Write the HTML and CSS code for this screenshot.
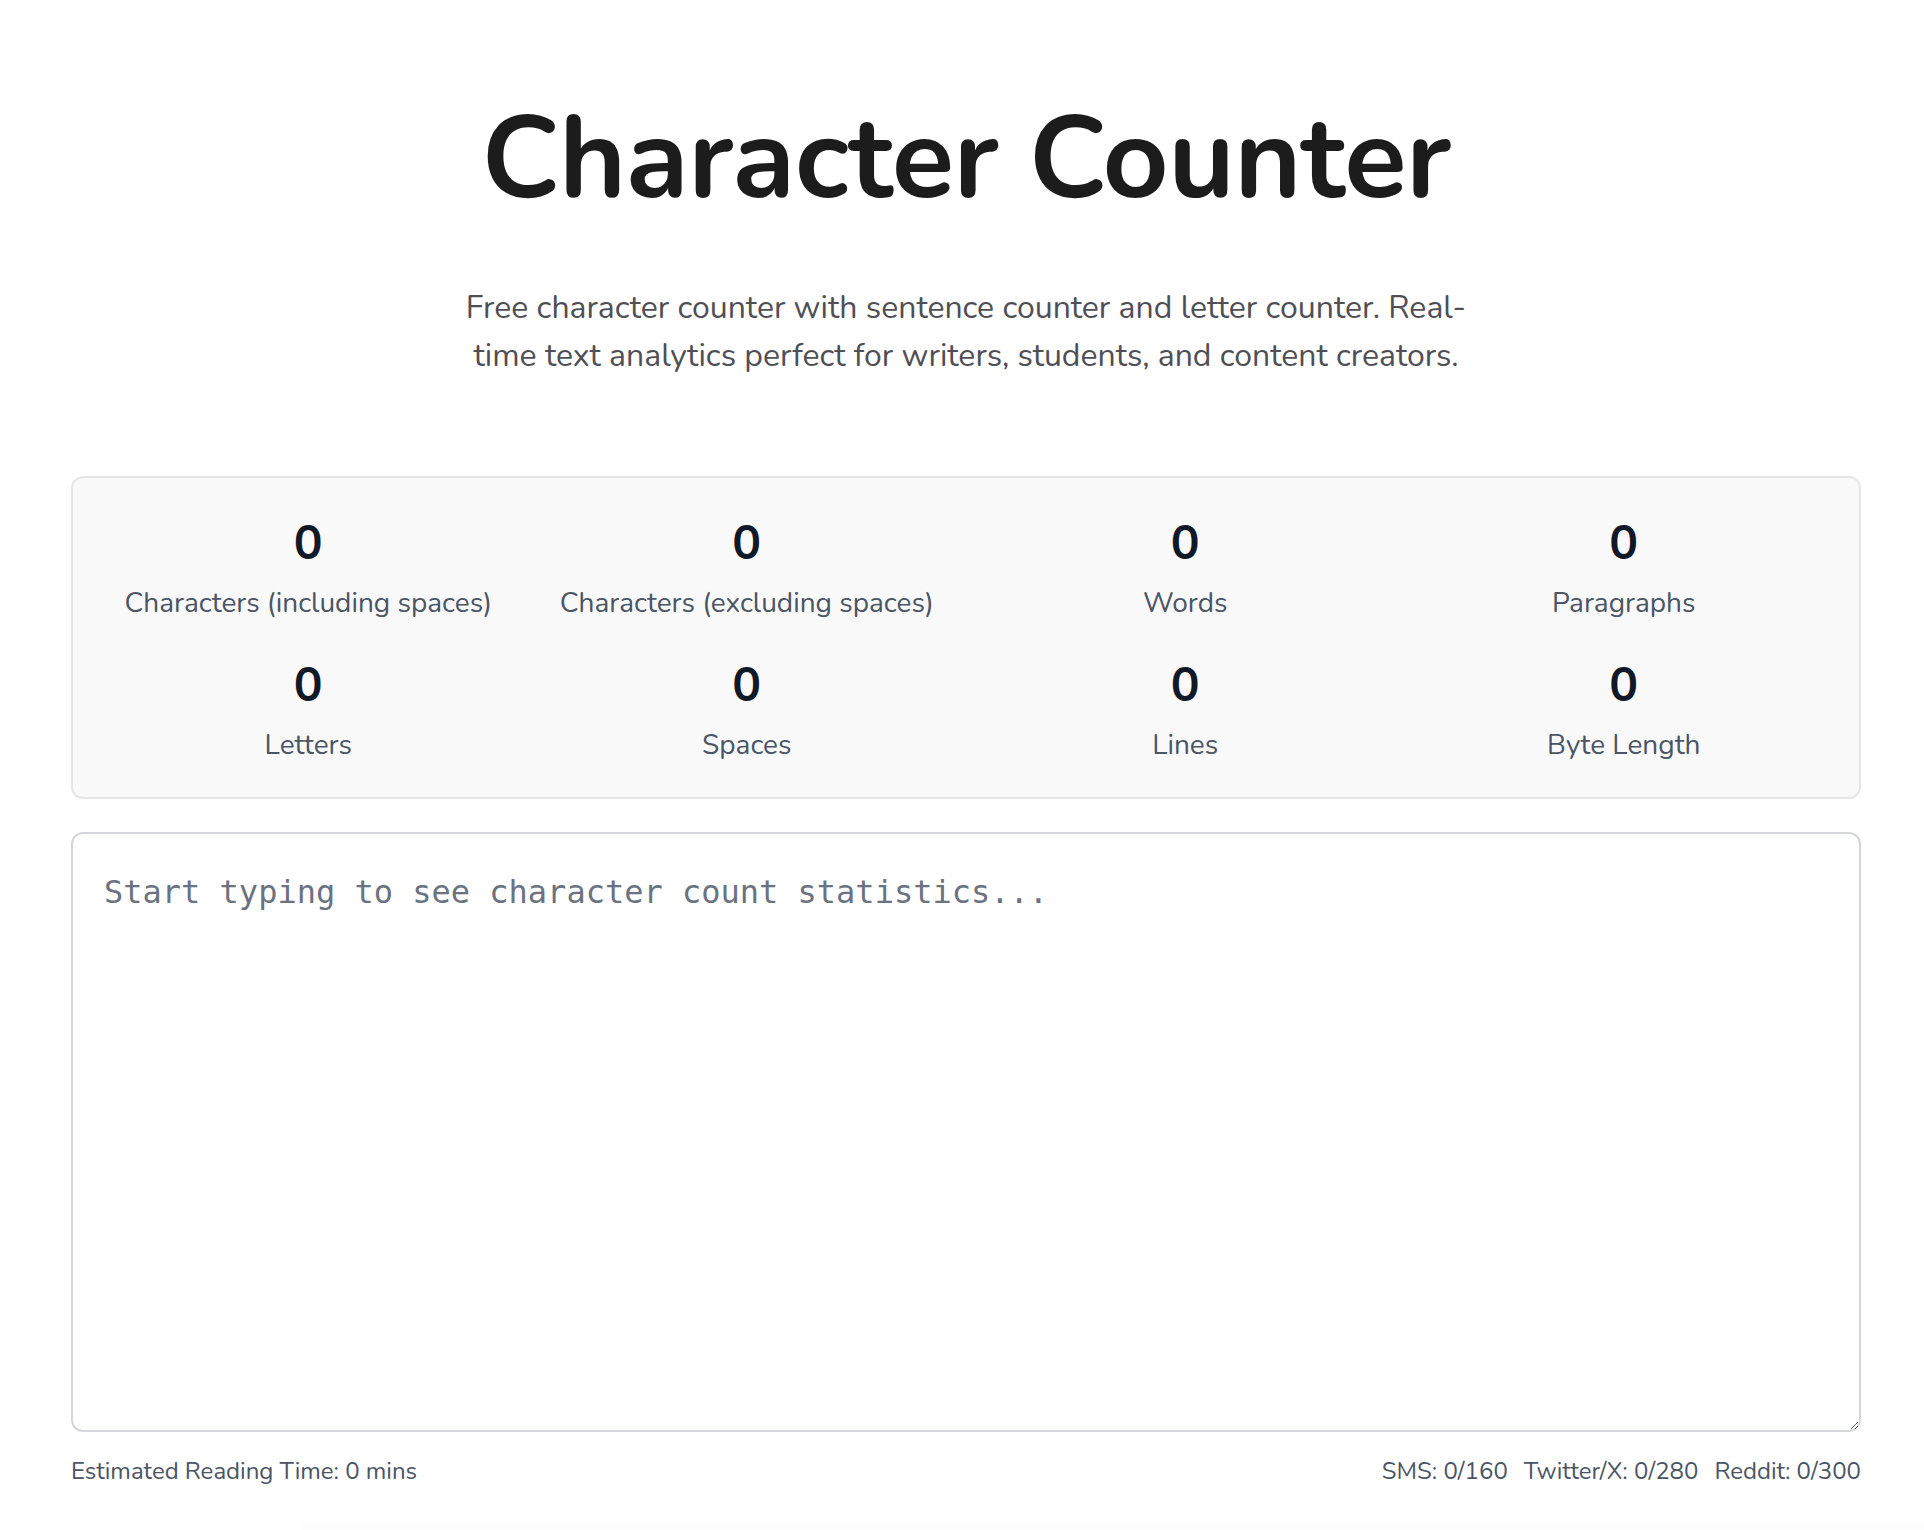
FILE: index.html
```html
<!DOCTYPE html>
<html lang="en">
<head>
<meta charset="utf-8">
<title>Character Counter</title>
<link rel="stylesheet" href="styles.css">
</head>
<body>
<main class="page">
  <header class="hero">
    <h1 class="title">Character Counter</h1>
    <p class="subtitle">Free character counter with sentence counter and letter counter. Real-time text analytics perfect for writers, students, and content creators.</p>
  </header>

  <section class="stats">
    <div class="stat"><div class="stat-num">0</div><div class="stat-label">Characters (including spaces)</div></div>
    <div class="stat"><div class="stat-num">0</div><div class="stat-label">Characters (excluding spaces)</div></div>
    <div class="stat"><div class="stat-num">0</div><div class="stat-label">Words</div></div>
    <div class="stat"><div class="stat-num">0</div><div class="stat-label">Paragraphs</div></div>
    <div class="stat"><div class="stat-num">0</div><div class="stat-label">Letters</div></div>
    <div class="stat"><div class="stat-num">0</div><div class="stat-label">Spaces</div></div>
    <div class="stat"><div class="stat-num">0</div><div class="stat-label">Lines</div></div>
    <div class="stat"><div class="stat-num">0</div><div class="stat-label">Byte Length</div></div>
  </section>

  <textarea class="editor" placeholder="Start typing to see character count statistics..."></textarea>

  <div class="meta">
    <span>Estimated Reading Time: 0 mins</span>
    <div class="limits">
      <span>SMS: 0/160</span>
      <span>Twitter/X: 0/280</span>
      <span>Reddit: 0/300</span>
    </div>
  </div>
</main>
<div class="next-section"></div>
</body>
</html>
```

FILE: styles.css
```css
* { box-sizing: border-box; }

html, body {
  margin: 0;
  background: #ffffff;
}

body {
  padding-left: 8px;
  font-family: "Nunito", "Lato", "Open Sans", sans-serif;
  color: #1c1c1c;
}

.page {
  max-width: 1790px;
  margin: 0 auto;
}

.hero {
  display: flex;
  flex-direction: column;
  align-items: center;
  padding-top: 90px;
}

.title {
  margin: 0;
  font-size: 115px;
  line-height: 140px;
  font-weight: 700;
  color: #1c1c1c;
  letter-spacing: -0.5px;
}

.subtitle {
  margin: 54px 0 0;
  max-width: 1024px;
  text-align: center;
  font-size: 32px;
  line-height: 48px;
  color: #4f4f55;
}

.stats {
  margin-top: 96px;
  display: grid;
  grid-template-columns: repeat(4, 1fr);
  column-gap: 32px;
  row-gap: 34px;
  padding: 37px 32px 32px;
  background: #f9f9fa;
  border: 2px solid #e6e6ea;
  border-radius: 12px;
}

.stat {
  display: flex;
  flex-direction: column;
  align-items: center;
  text-align: center;
}

.stat-num {
  font-size: 48px;
  line-height: 56px;
  font-weight: 700;
  color: #111827;
}

.stat-label {
  margin-top: 12px;
  font-size: 28px;
  line-height: 40px;
  color: #4b5563;
}

.editor {
  display: block;
  width: 100%;
  height: 600px;
  margin-top: 33px;
  padding: 34px 31px 31px;
  border: 2px solid #d4d6dc;
  border-radius: 12px;
  background: #ffffff;
  font-family: "DejaVu Sans Mono", "Liberation Mono", monospace;
  font-size: 32px;
  line-height: 48px;
  color: #1f2937;
  resize: vertical;
  outline: none;
}

.editor::placeholder {
  color: #6b7280;
}

.meta {
  display: flex;
  justify-content: space-between;
  align-items: center;
  margin-top: 23px;
  font-size: 24px;
  line-height: 32px;
  color: #4b5563;
}

.limits {
  display: flex;
  gap: 16px;
}

.next-section {
  margin: 24px 0 0 294px;
  height: 40px;
  background: linear-gradient(to bottom, #ffffff, #fbfbfb);
}
```
